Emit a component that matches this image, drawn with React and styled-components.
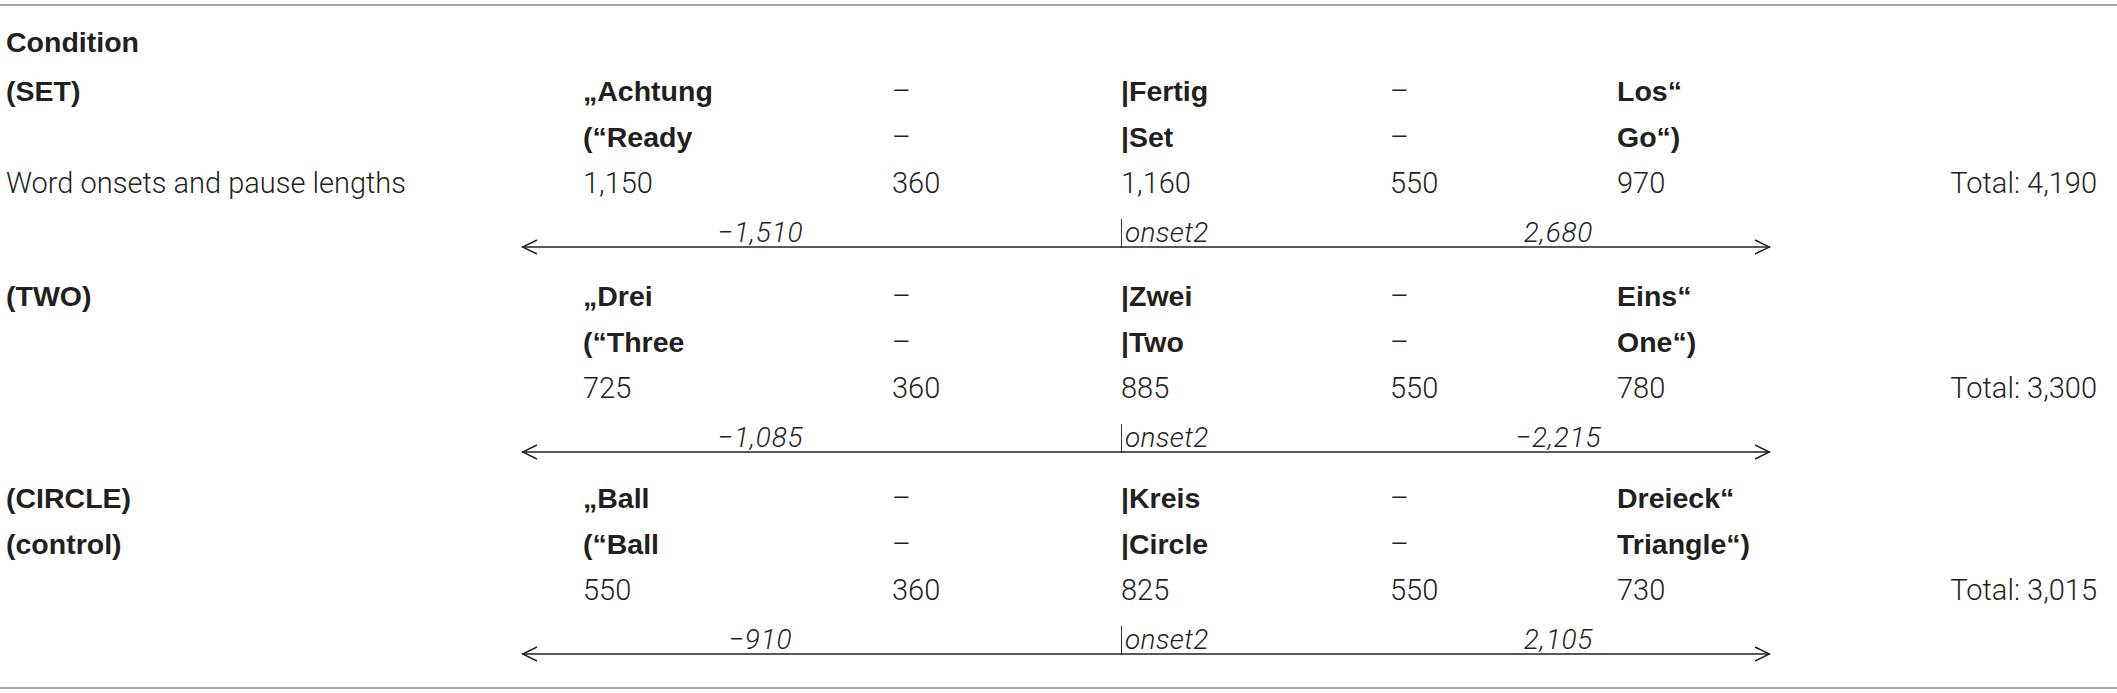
import React from "react";
import styled, { createGlobalStyle } from "styled-components";

const GlobalStyle = createGlobalStyle`
  body {
    margin: 0;
    background: #fff;
    color: #231f20;
  }
`;

const conditions = [
  {
    names: ["(SET)", ""],
    words: ["„Achtung", "–", "|Fertig", "–", "Los“"],
    trans: ["(“Ready", "–", "|Set", "–", "Go“)"],
    nums: ["1,150", "360", "1,160", "550", "970"],
    total: "Total: 4,190",
    left: "−1,510",
    right: "2,680",
    pb: 18,
  },
  {
    names: ["(TWO)", ""],
    words: ["„Drei", "–", "|Zwei", "–", "Eins“"],
    trans: ["(“Three", "–", "|Two", "–", "One“)"],
    nums: ["725", "360", "885", "550", "780"],
    total: "Total: 3,300",
    left: "−1,085",
    right: "−2,215",
    pb: 15,
  },
  {
    names: ["(CIRCLE)", "(control)"],
    words: ["„Ball", "–", "|Kreis", "–", "Dreieck“"],
    trans: ["(“Ball", "–", "|Circle", "–", "Triangle“)"],
    nums: ["550", "360", "825", "550", "730"],
    total: "Total: 3,015",
    left: "−910",
    right: "2,105",
    pb: 25,
  },
];

const Table = styled.div`
  margin-top: 4px;
  border-top: 2px solid #a8a8a8;
  border-bottom: 2px solid #a8a8a8;
  padding: 13px 20px 0 6px;
`;

const Row = styled.div`
  display: grid;
  grid-template-columns: 577px 309px 229px 269px 227px 1fr auto;
  height: ${(p) => p.$h || 46}px;
  align-items: start;
`;

const Cell = styled.div`
  font-family: ${(p) =>
    p.$bold ? '"Liberation Sans", Arial, sans-serif' : "Roboto, sans-serif"};
  font-weight: ${(p) => (p.$bold ? 700 : 300)};
  font-size: ${(p) => (p.$bold ? 28.5 : 29)}px;
  line-height: 46px;
  white-space: nowrap;
  text-align: ${(p) => (p.$right ? "right" : "left")};
`;

const ArrowBlock = styled.div`
  margin-left: 515px;
  width: 1250px;
  padding: 12px 0 ${(p) => p.$pb}px;
`;

const Labels = styled.div`
  display: grid;
  grid-template-columns: 479px 121px 225px 425px;
  height: 29px;
`;

const Label = styled.div`
  font-family: Roboto, sans-serif;
  font-weight: 300;
  font-style: italic;
  font-size: 28px;
  letter-spacing: 0.8px;
  line-height: 30px;
  text-align: ${(p) => (p.$left ? "left" : "center")};
  white-space: nowrap;
`;

const Onset = styled(Label)`
  border-left: 1.5px solid #333;
  padding-left: 3px;
  height: 29px;
  margin-top: 1px;
  line-height: 28px;
  letter-spacing: 0.3px;
`;

const ArrowSvg = styled.svg`
  display: block;
  margin-top: -8px;
`;

const Arrow = () => (
  <ArrowSvg width="1250" height="16" viewBox="0 0 1250 16">
    <g fill="none" stroke="#231f20" strokeWidth="1.4">
      <line x1="1" y1="8" x2="1249" y2="8" />
      <polyline points="16,1 1.5,8 16,15" />
      <polyline points="1234,1 1248.5,8 1234,15" />
    </g>
  </ArrowSvg>
);

const WordRow = ({ name, items, bold }) => (
  <Row>
    <Cell $bold>{name}</Cell>
    {items.map((w, i) => (
      <Cell key={i} $bold={bold && w !== "–"}>
        {w}
      </Cell>
    ))}
    <Cell />
  </Row>
);

const Block = ({ c, first }) => (
  <>
    <WordRow name={c.names[0]} items={c.words} bold />
    <WordRow name={c.names[1]} items={c.trans} bold />
    <Row>
      <Cell>{first ? "Word onsets and pause lengths" : ""}</Cell>
      {c.nums.map((n, i) => (
        <Cell key={i}>{n}</Cell>
      ))}
      <Cell $right>{c.total}</Cell>
    </Row>
    <ArrowBlock $pb={c.pb}>
      <Labels>
        <Label>{c.left}</Label>
        <div />
        <Onset $left>onset2</Onset>
        <Label>{c.right}</Label>
      </Labels>
      <Arrow />
    </ArrowBlock>
  </>
);

export default function App() {
  return (
    <>
      <GlobalStyle />
      <Table>
        <Row $h={49}>
          <Cell $bold>Condition</Cell>
        </Row>
        {conditions.map((c, i) => (
          <Block key={i} c={c} first={i === 0} />
        ))}
      </Table>
    </>
  );
}
